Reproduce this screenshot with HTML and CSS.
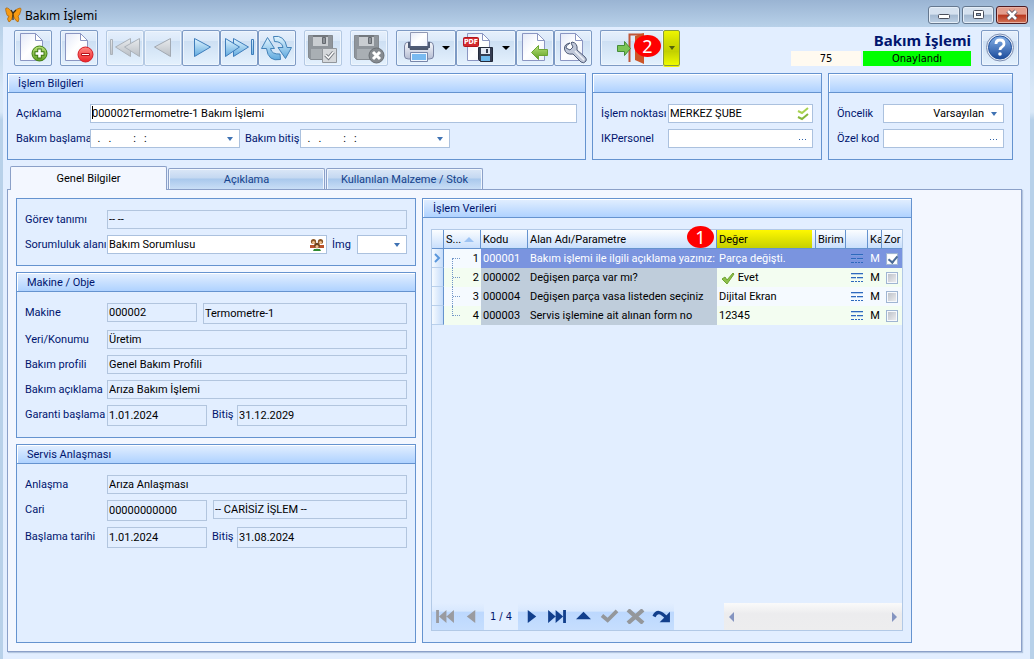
FILE: index.html
```html
<!DOCTYPE html>
<html lang="tr">
<head>
<meta charset="utf-8">
<title>Bakım İşlemi</title>
<link rel="stylesheet" href="styles.css">
</head>
<body>
<svg class="defs" aria-hidden="true">
  <defs>
    <linearGradient id="paper" x1="0" y1="0" x2="1" y2="1"><stop offset="0" stop-color="#e4e9f8"/><stop offset=".5" stop-color="#ffffff"/><stop offset="1" stop-color="#eef1fb"/></linearGradient>
    <linearGradient id="blue" x1="0" y1="0" x2="0" y2="1"><stop offset="0" stop-color="#e2f5ff"/><stop offset="1" stop-color="#5fa9de"/></linearGradient>
    <linearGradient id="gray" x1="0" y1="0" x2="0" y2="1"><stop offset="0" stop-color="#e8ebee"/><stop offset="1" stop-color="#b9bec4"/></linearGradient>
    <linearGradient id="green" x1="0" y1="0" x2="0" y2="1"><stop offset="0" stop-color="#b9e37c"/><stop offset="1" stop-color="#5f9e22"/></linearGradient>
    <linearGradient id="red" x1="0" y1="0" x2="0" y2="1"><stop offset="0" stop-color="#ff8a84"/><stop offset="1" stop-color="#ee2226"/></linearGradient>
    <linearGradient id="metal" x1="0" y1="0" x2="0" y2="1"><stop offset="0" stop-color="#fafbfe"/><stop offset="1" stop-color="#b4bcd2"/></linearGradient>
    <linearGradient id="help" x1="0" y1="0" x2="0" y2="1"><stop offset="0" stop-color="#86b2e8"/><stop offset="1" stop-color="#1c4b9b"/></linearGradient>
    <symbol id="page" viewBox="0 0 32 32"><path d="M3.500 1.500h15l7 7v20h-22z" fill="url(#paper)" stroke="#8b96c2"/><path d="M18.500 1.500v7h7z" fill="#fff" stroke="#8b96c2"/></symbol>
    <symbol id="disk" viewBox="0 0 32 32"><path d="M1.500 3.500h24v24h-22l-2-2z" fill="#8f959b" stroke="#858b91"/><path d="M6 3h15v11H6z" fill="#c9cdd1"/><path d="M6 3h15v2H6z" fill="#74797e"/><path d="M15.500 5.500h3v6h-3z" fill="#8d9298" stroke="#656a70"/><path d="M4 17h18v10H4z" fill="#a9afb4"/></symbol>
    <symbol id="down" viewBox="0 0 8 8"><path d="M1 2h6L4 6z" fill="#3f72b3"/></symbol>
    <symbol id="dots" viewBox="0 0 8 8"><path d="M0 4h1v1H0zM3 4h1v1H3zM6 4h1v1H6z" fill="#2f62a8"/></symbol>
    <symbol id="lines" viewBox="0 0 14 12"><path d="M1 1h12v1H1zM1 5h5v1H1zM7 5h6v1H7zM1 9h3v1H1zM5 9h2v1H5zM8 9h2v1H8zM11 9h2v1h-2z" fill="#2e69bd"/><path d="M1 2h12v1H1zM1 6h5v1H1zM7 6h6v1H7z" fill="#7fa9e0" opacity=".5"/></symbol>
  </defs>
</svg>
<div class="window">
  <header class="titlebar">
    <svg width="17" height="16" viewBox="0 0 17 16" aria-hidden="true"><path d="M8 7Q4 0 1 1q-1 1 1 7 0 1 2 1-3 3 0 6 3-1 4-7 2 6 5 7 2-3 0-6 2-1 2-3 2-5 0-5-4 0-7 6z" fill="#f79a12" stroke="#a86208" stroke-width=".7"/><path d="M8 5v8M8 6L6 3M8 6l3-3" stroke="#38280e" stroke-width="1.200"/></svg>
    <span class="titlebar-text">Bakım İşlemi</span>
    <button class="winbtn" aria-label="Küçült"><svg width="30" height="16"><rect x="9.500" y="7.500" width="11" height="4" rx="1" fill="#fff" stroke="#4a4f5c"/></svg></button>
    <button class="winbtn" aria-label="Büyüt"><svg width="30" height="16"><rect x="10.500" y="3.500" width="10" height="8" rx="1" fill="#fff" stroke="#4a4f5c"/><rect x="13.500" y="6.500" width="4" height="2" fill="#9fb3cc" stroke="#4a4f5c"/></svg></button>
    <button class="winbtn close" aria-label="Kapat"><svg width="30" height="16"><path d="M11 4l8 8M19 4l-8 8" stroke="#5a5260" stroke-width="4.500"/><path d="M11 4l8 8M19 4l-8 8" stroke="#fff" stroke-width="2.600"/></svg></button>
  </header>
  <main class="content">
    <div class="toolbar">
      <button class="tool" aria-label="Yeni"><svg viewBox="0 0 32 32"><use href="#page"/><circle cx="22.500" cy="21.500" r="7.500" fill="url(#green)" stroke="#427f14"/><path d="M22.500 16.500v10M17.500 21.500h10" stroke="#3c7612" stroke-width="4.400"/><path d="M22.500 17.500v8M18.500 21.500h8" stroke="#fff" stroke-width="2.600"/></svg></button>
      <button class="tool" aria-label="Sil"><svg viewBox="0 0 32 32"><use href="#page" x="-1"/><circle cx="22.500" cy="22.500" r="7.500" fill="url(#red)" stroke="#d51d25"/><path d="M18.500 21.500h8v2h-8z" fill="#fff" stroke="#b71018"/></svg></button>
      <div class="tools">
        <button class="tool off" aria-label="İlk kayıt"><svg viewBox="0 0 32 32"><g fill="url(#gray)" stroke="#abb2ba"><path d="M1.500 7.500h2v15h-2zM21.500 6.500v18L6.500 15z"/><path d="M30.500 6.500v18l-15-9.500z"/></g></svg></button>
        <button class="tool off" aria-label="Önceki kayıt"><svg viewBox="0 0 32 32"><path d="M23.500 6.500v18L7.500 15z" fill="url(#gray)" stroke="#a2a9b2"/></svg></button>
        <button class="tool" aria-label="Sonraki kayıt"><svg viewBox="0 0 32 32"><path d="M9.500 6.500v18l16-9.500z" fill="url(#blue)" stroke="#3f7dbb"/></svg></button>
        <button class="tool" aria-label="Son kayıt"><svg viewBox="0 0 32 32"><g fill="url(#blue)" stroke="#3f7dbb"><path d="M10.500 6.500v18L25.500 15z"/><path d="M2.500 6.500v18l14-9.500zM28.500 7.500h2v15h-2z"/></g></svg></button>
        <button class="tool" aria-label="Yenile"><svg viewBox="0 0 32 32"><g fill="url(#blue)" stroke="#4382b8"><path d="M12.500 4.500q11-2 13.500 11h4.500l-6 11-7.500-11h5q-1-6-8.500-6z"/><path d="M19.500 27.500Q7 30 5.500 16.500h-5l6-11 7 11h-4q1 6 9.500 5.500z"/></g></svg></button>
      </div>
      <button class="tool off" aria-label="Kaydet"><svg viewBox="0 0 32 32"><use href="#disk"/><path d="M15.500 16.500h14v14h-14z" fill="#d5d8db" stroke="#92979c"/><path d="M18.500 23l3 3 5-6" fill="none" stroke="#777c82" stroke-width="3.500"/><path d="M18.500 23l3 3 5-6" fill="none" stroke="#fff" stroke-width="1.500"/></svg></button>
      <button class="tool off" aria-label="Kaydet ve kapat"><svg viewBox="0 0 32 32"><use href="#disk"/><circle cx="23.500" cy="23.500" r="7.500" fill="#868b90" stroke="#6a6f74"/><path d="M20 20l7 7M27 20l-7 7" stroke="#fff" stroke-width="3"/></svg></button>
      <div class="tools">
        <button class="tool wide" aria-label="Yazdır"><svg viewBox="0 0 32 32"><path d="M1.500 14q0-4 4-4h21q4 0 4 4v10q0 3-4 3h-21q-4 0-4-3z" fill="url(#metal)" stroke="#7b85a4"/><path d="M7.500.5h17v14h-17z" fill="url(#paper)" stroke="#9098b4"/><path d="M6 14h20l-1 4H7z" fill="#4e596f"/><path d="M6 10v5h20v-5" fill="none" stroke="#4f5b75" stroke-width="2"/><path d="M7.500 20.500h17v9h-17z" fill="#eef5ff" stroke="#7886a8"/><path d="M9 22h14v6H9z" fill="#79baf0"/></svg><svg class="caret-down" viewBox="0 0 8 8"><path d="M0 2h8L4 6z"/></svg></button>
        <button class="tool wide" aria-label="PDF olarak kaydet"><svg viewBox="0 0 32 32"><use href="#page" x="1"/><rect x="0.500" y="5.500" width="15" height="9" rx="1" fill="#d3292e" stroke="#b2161c"/><text x="8" y="12" class="pdf">PDF</text><path d="M15.500 15.500h14v14h-12l-2-2z" fill="#353c50" stroke="#232a3b"/><path d="M18 16h9v6h-9z" fill="#e3e8f3"/><path d="M23 17h2v4h-2z" fill="#353c50"/><path d="M18 24h9v5h-9z" fill="#6db7ea"/></svg><svg class="caret-down" viewBox="0 0 8 8"><path d="M0 2h8L4 6z"/></svg></button>
        <button class="tool" aria-label="Aktar"><svg viewBox="0 0 32 32"><use href="#page"/><path d="M12.500 20.500l7-7v4h9v6h-9v4z" fill="url(#green)" stroke="#6ca434"/></svg></button>
        <button class="tool" aria-label="Ayarlar"><svg viewBox="0 0 32 32"><use href="#page"/><path d="M13 11q-6 1-5.500 6 1 6 8.500 5l8 8q3 2 5-1 1-2-1-4l-8-7q1-7-5-8l-1 1 2 4-3 3-4-2q-1-2 4-5z" fill="#bfc7d8" stroke="#4e5a76"/><path d="M18 19l9 9" stroke="#eef1f7" stroke-width="1.500"/></svg></button>
      </div>
      <div class="exit">
        <button class="tool exit-main" aria-label="Çıkış"><svg viewBox="0 0 32 32"><path d="M13.500 30V2.500H28" fill="none" stroke="#c0573a" stroke-width="2"/><path d="M19 4l9-3v31l-9-4z" fill="#cc5527"/><path d="M1.500 13.500h7v-4l6 7-6 7v-4h-7z" fill="#7cc456" stroke="#448d38"/></svg></button>
        <button class="tool exit-more" aria-label="Çıkış seçenekleri"><svg class="mini" viewBox="0 0 8 8"><path d="M1 2h6L4 6z" fill="#53620a"/></svg></button>
        <span class="badge badge-two">2</span>
      </div>
      <div class="status">
        <h1 class="status-title">Bakım İşlemi</h1>
        <div class="status-row"><span class="status-no">75</span><span class="status-state">Onaylandı</span></div>
      </div>
      <button class="tool" aria-label="Yardım"><svg viewBox="0 0 32 32"><circle cx="16" cy="15.500" r="13.500" fill="#e4ebf6" stroke="#7e8fb1"/><circle cx="16" cy="15.500" r="11.500" fill="url(#help)" stroke="#23529c"/><path d="M12 12q0-4 4-4t4 4q0 2-2 3t-2 3" fill="none" stroke="#fff" stroke-width="2.800"/><circle cx="16" cy="22" r="1.800" fill="#fff"/></svg></button>
    </div>

    <div class="top-groups">
      <section class="group">
        <h2 class="group-head">İşlem Bilgileri</h2>
        <div class="form form-info">
          <div class="row"><label for="acik">Açıklama</label><div class="field grow"><span class="caret"></span><input id="acik" value="000002Termometre-1 Bakım İşlemi"></div></div>
          <div class="row"><label for="basla">Bakım başlama</label><div class="field date"><input id="basla" value="  .   .        :   :"><svg class="mini"><use href="#down"/></svg></div><label class="label-mid long" for="bitis">Bakım bitiş</label><div class="field date"><input id="bitis" value="  .   .        :   :"><svg class="mini"><use href="#down"/></svg></div></div>
        </div>
      </section>
      <section class="group">
        <h2 class="group-head"></h2>
        <div class="form form-point">
          <div class="row"><label for="nokta">İşlem noktası</label><div class="field grow"><input id="nokta" value="MERKEZ ŞUBE"><svg class="icon" viewBox="0 0 14 14"><path d="M2 4l4 2 6-5" fill="none" stroke="#a8d24f" stroke-width="2"/><path d="M2 10l4 2 6-5" fill="none" stroke="#86b83b" stroke-width="2"/></svg></div></div>
          <div class="row"><label for="ik">IKPersonel</label><div class="field grow"><input id="ik"><svg class="mini"><use href="#dots"/></svg></div></div>
        </div>
      </section>
      <section class="group">
        <h2 class="group-head"></h2>
        <div class="form form-code">
          <div class="row"><label for="oncelik">Öncelik</label><div class="field grow"><select id="oncelik" class="right"><option>Varsayılan</option></select><svg class="mini"><use href="#down"/></svg></div></div>
          <div class="row"><label for="ozel">Özel kod</label><div class="field grow"><input id="ozel"><svg class="mini"><use href="#dots"/></svg></div></div>
        </div>
      </section>
    </div>

    <div class="tabs" role="tablist">
      <button class="tab active" role="tab" aria-selected="true">Genel Bilgiler</button>
      <button class="tab" role="tab">Açıklama</button>
      <button class="tab" role="tab">Kullanılan Malzeme / Stok</button>
    </div>

    <div class="page">
      <div class="left">
        <section class="group">
          <div class="form">
            <div class="row"><label for="gorev">Görev tanımı</label><div class="field ro grow"><input id="gorev" value="-- --" readonly></div></div>
            <div class="row"><label for="alan">Sorumluluk alanı</label><div class="field grow"><input id="alan" value="Bakım Sorumlusu"><svg class="icon" viewBox="0 0 14 14"><path d="M0 7h5v3H0zM9 7h5v3H9z" fill="#b9532c"/><path d="M3 13l1-2h6l1 2z" fill="#2f8a2f"/><circle cx="3.500" cy="3.500" r="2.600" fill="#8a5524"/><circle cx="10.500" cy="3.500" r="2.600" fill="#8a5524"/><circle cx="7" cy="7.500" r="2.800" fill="#6d421c"/><circle cx="3.500" cy="4.500" r="1.500" fill="#f0c08b"/><circle cx="10.500" cy="4.500" r="1.500" fill="#f0c08b"/><circle cx="7" cy="8.500" r="1.500" fill="#f0c08b"/></svg></div><label class="label-mid" for="img">İmg</label><div class="field img"><select id="img"><option></option></select><svg class="mini"><use href="#down"/></svg></div></div>
          </div>
        </section>
        <section class="group">
          <h2 class="group-head">Makine / Obje</h2>
          <div class="form">
            <div class="row"><label for="makine">Makine</label><div class="field ro code"><input id="makine" value="000002" readonly></div><div class="field ro tall grow gap"><input aria-label="Makine adı" value="Termometre-1" readonly></div></div>
            <div class="row"><label for="yer">Yeri/Konumu</label><div class="field ro grow"><input id="yer" value="Üretim" readonly></div></div>
            <div class="row"><label for="profil">Bakım profili</label><div class="field ro grow"><input id="profil" value="Genel Bakım Profili" readonly></div></div>
            <div class="row"><label for="bacik">Bakım açıklama</label><div class="field ro grow"><input id="bacik" value="Arıza Bakım İşlemi" readonly></div></div>
            <div class="row"><label for="gar">Garanti başlama</label><div class="field ro tall day"><input id="gar" value="1.01.2024" readonly></div><label class="label-mid" for="garb">Bitiş</label><div class="field ro tall grow"><input id="garb" value="31.12.2029" readonly></div></div>
          </div>
        </section>
        <section class="group fill">
          <h2 class="group-head">Servis Anlaşması</h2>
          <div class="form">
            <div class="row"><label for="anl">Anlaşma</label><div class="field ro grow"><input id="anl" value="Arıza Anlaşması" readonly></div></div>
            <div class="row"><label for="cari">Cari</label><div class="field ro tall day"><input id="cari" value="00000000000" readonly></div><div class="field ro grow gap"><input aria-label="Cari adı" value="-- CARİSİZ İŞLEM --" readonly></div></div>
            <div class="row"><label for="bt">Başlama tarihi</label><div class="field ro tall day"><input id="bt" value="1.01.2024" readonly></div><label class="label-mid" for="btb">Bitiş</label><div class="field ro tall grow"><input id="btb" value="31.08.2024" readonly></div></div>
          </div>
        </section>
      </div>

      <section class="group right-panel">
        <h2 class="group-head">İşlem Verileri</h2>
        <div class="grid">
          <table>
            <colgroup><col class="c-ind"><col class="c-no"><col class="c-code"><col><col class="c-val"><col class="c-unit"><col class="c-ico"><col class="c-ka"><col class="c-zor"></colgroup>
            <thead><tr><th></th><th>S... <svg class="sort" viewBox="0 0 10 6"><path d="M0 5l5-5 5 5z" fill="#9dc3f3"/></svg></th><th>Kodu</th><th class="has-badge">Alan Adı/Parametre<span class="badge badge-one">1</span></th><th class="mark"><span>Değer</span></th><th>Birim</th><th></th><th>Ka</th><th>Zor</th></tr></thead>
            <tbody>
              <tr class="sel"><td class="ind"><svg viewBox="0 0 8 10"><path d="M2 1l4 4-4 4" fill="none" stroke="#5a97dc" stroke-width="2"/></svg></td><td class="no"><span class="tree first"></span>1</td><td class="key">000001</td><td class="key">Bakım işlemi ile ilgili açıklama yazınız:</td><td>Parça değişti.</td><td></td><td class="mid"><svg class="lines"><use href="#lines"/></svg></td><td class="mid">M</td><td class="mid"><input type="checkbox" aria-label="Zorunlu 000001" checked></td></tr>
              <tr><td class="ind"></td><td class="no"><span class="tree"></span>2</td><td class="key">000002</td><td class="key">Değişen parça var mı?</td><td><svg class="tick" viewBox="0 0 14 12"><path d="M1 7l3-2 2 3 6-7 1 1-7 10z" fill="#8dc04a" stroke="#6fa332"/></svg> Evet</td><td></td><td class="mid"><svg class="lines"><use href="#lines"/></svg></td><td class="mid">M</td><td class="mid"><input type="checkbox" aria-label="Zorunlu 000002"></td></tr>
              <tr><td class="ind"></td><td class="no"><span class="tree"></span>3</td><td class="key">000004</td><td class="key">Değişen parça vasa listeden seçiniz</td><td>Dijital Ekran</td><td></td><td class="mid"><svg class="lines"><use href="#lines"/></svg></td><td class="mid">M</td><td class="mid"><input type="checkbox" aria-label="Zorunlu 000004"></td></tr>
              <tr><td class="ind"></td><td class="no"><span class="tree last"></span>4</td><td class="key">000003</td><td class="key">Servis işlemine ait alınan form no</td><td>12345</td><td></td><td class="mid"><svg class="lines"><use href="#lines"/></svg></td><td class="mid">M</td><td class="mid"><input type="checkbox" aria-label="Zorunlu 000003"></td></tr>
            </tbody>
          </table>
          <div class="grid-foot">
            <div class="nav">
              <button aria-label="İlk"><svg viewBox="0 0 20 16"><path d="M0 1h3v14H0zM11 1v14L3 8zM19 1v14l-8-7z" fill="#9a9ba0"/></svg></button>
              <button aria-label="Önceki"><svg viewBox="0 0 20 16"><path d="M14 1v14L5 8z" fill="#9a9ba0"/></svg></button>
            </div>
            <span class="pos">1 / 4</span>
            <div class="nav">
              <button aria-label="Sonraki"><svg viewBox="0 0 20 16"><path d="M6 1v14l9-7z" fill="#123f8c"/></svg></button>
              <button aria-label="Son"><svg viewBox="0 0 20 16"><path d="M0 1v14l8-7zM8 1v14l8-7zM16 1h3v14h-3z" fill="#123f8c"/></svg></button>
              <button aria-label="Düzenle"><svg viewBox="0 0 20 16"><path d="M2 11l8-8 8 8z" fill="#123f8c"/></svg></button>
              <button aria-label="Onayla"><svg viewBox="0 0 20 16"><path d="M2 7l6 5L18 2" fill="none" stroke="#94979b" stroke-width="4"/></svg></button>
              <button aria-label="Vazgeç"><svg viewBox="0 0 20 16"><path d="M2 1l16 14M18 1L2 15" fill="none" stroke="#94979b" stroke-width="4.500"/></svg></button>
              <button aria-label="Yenile"><svg viewBox="0 0 20 16"><path d="M2 8q4-9 13 1" fill="none" stroke="#123f8c" stroke-width="3.500"/><path d="M19 3v11H8z" fill="#123f8c"/></svg></button>
            </div>
            <div class="scroll"><button aria-label="Sola kaydır"><svg viewBox="0 0 6 10"><path d="M5 0v10L0 5z" fill="#8494c0"/></svg></button><button aria-label="Sağa kaydır"><svg viewBox="0 0 6 10"><path d="M1 0v10l5-5z" fill="#8494c0"/></svg></button></div>
          </div>
        </div>
      </section>
    </div>
  </main>
</div>
</body>
</html>
```

FILE: styles.css
```css
* { box-sizing: border-box; }
body { margin: 0; font: 11px/17px Roboto, "DejaVu Sans Condensed", sans-serif; color: #000; }
button, input, select { font: inherit; color: inherit; margin: 0; padding: 0; }
h1, h2 { margin: 0; font: inherit; }
svg { display: block; flex: none; }
.defs { position: absolute; width: 0; height: 0; }

.window { min-height: 100vh; display: flex; flex-direction: column; padding: 0 4px 0 3px; background: linear-gradient(#9ab4d3, #b8d1e9 27px, #d9e8f7 90px, #d9e8f7 112px, #b8d1e9 120px); }
.titlebar { height: 27px; display: flex; align-items: flex-start; gap: 2px; padding: 6px 2px 0 2px; }
.titlebar > svg { margin-top: 1px; }
.titlebar-text { flex: 1; padding-left: 1px; font: 12px/20px "Noto Sans", sans-serif; }
.winbtn { width: 32px; height: 18px; padding: 0; border: 1px solid #65788f; border-radius: 3px; background: linear-gradient(#d5e1ef 45%, #a4b9d1 50%, #bdd0e5); box-shadow: inset 0 0 0 1px #e5eef8; }
.winbtn.close { border-color: #4d1b22; background: linear-gradient(#e39d8c 45%, #b8361d 50%, #d17357); box-shadow: inset 0 0 0 1px #eab2a4; }

.content { flex: 1; display: flex; flex-direction: column; padding: 3px 8px 7px 4px; background: #e2eeff; }
.toolbar { display: flex; gap: 8px; padding: 0 3px 0 7px; }
.tools { display: flex; }
.tool { width: 38px; height: 36px; display: flex; align-items: center; justify-content: center; gap: 7px; border: 1px solid #7d9ac4; border-radius: 2px; background: linear-gradient(#e6f0fc, #dbe9f9 28%, #cddff3 30%, #e4f1fd); box-shadow: inset 0 0 0 1px #eef5fd; }
.tool svg { width: 32px; height: 32px; }
.tool.wide { width: 60px; }
.tool.off { border-color: #b4c9e3; }
.tool .caret-down { width: 8px; height: 8px; }
.pdf { font: bold 7px "DejaVu Sans Condensed", sans-serif; fill: #fff; text-anchor: middle; }
.exit { position: relative; display: flex; }
.exit-main { width: 63px; border-right: 0; border-radius: 2px 0 0 2px; }
.exit-more { width: 17px; background: linear-gradient(#eef600, #d3de00 30%, #c2d000 60%, #eefb00); border-color: #879b3c; box-shadow: 0 1px #f4f500; }
.tool .mini { width: 8px; height: 8px; }
.badge { position: absolute; width: 27px; height: 22px; border-radius: 50%; background: #f00; color: #fff; text-align: center; font: 18px/22px "Noto Sans", sans-serif; }
.badge-two { left: 34px; top: 5px; }
.badge-one { right: 2px; top: -4px; }
.status { flex: 1; display: flex; flex-direction: column; align-items: flex-end; padding-right: 2px; }
.status-title { font: bold 15px/21px "Noto Sans", sans-serif; color: #00156e; }
.status-row { display: flex; gap: 2px; font: 11px/15px "DejaVu Sans Condensed", sans-serif; text-align: center; }
.status-no { width: 70px; background: #fffaf0; }
.status-state { width: 108px; background: #0f0; }

.top-groups { display: grid; grid-template-columns: 579fr 230fr 185fr; gap: 6px; margin: 7px 9px 6px 0; }
.group { border: 1px solid #6593cf; background: #e2eeff; }
.group-head { height: 19px; padding-left: 10px; line-height: 19px; color: #00156e; background: linear-gradient(#e3efff, #afd2ff); border-bottom: 1px solid #6593cf; box-shadow: inset 1px 1px #fff; }
.form { display: flex; flex-direction: column; gap: 6px; padding: 11px 8px; --label: 82px; }
.form-info { --label: 74px; }
.form-point { --label: 67px; }
.form-code { --label: 46px; }
.row { display: flex; align-items: flex-start; }
.row label { width: var(--label); flex: none; line-height: 19px; color: #00156e; white-space: nowrap; }
.row .label-mid { width: 30px; padding-left: 5px; }
.row .long { width: 60px; }
.field { position: relative; display: flex; align-items: center; height: 19px; padding-right: 5px; border: 1px solid #abc1de; background: #fff; }
.field input, .field select { flex: 1; min-width: 0; width: 0; height: 17px; padding: 0 0 0 1px; border: 0; outline: 0; background: none; appearance: none; }
.field .right { text-align: right; text-align-last: right; padding-right: 6px; }
.field.ro { background: none; border-color: #b2c5de; }
.field.tall { height: 21px; }
.grow { flex: 1; min-width: 0; }
.gap { margin-left: 6px; }
.date { width: 150px; }
.code { width: 90px; }
.day { width: 100px; }
.img { width: 50px; }
.mini { width: 8px; height: 8px; }
.icon { width: 14px; height: 14px; margin-right: -3px; }
.caret { position: absolute; left: 1px; top: 1px; width: 1px; height: 13px; background: #000; }

.tabs { display: flex; gap: 1px; align-items: flex-end; height: 23px; padding-left: 3px; }
.tab { width: 157px; height: 21px; border: 1px solid #8ba0c8; border-bottom: 0; border-radius: 2px 2px 0 0; color: #15428b; background: linear-gradient(#dbe7f7, #c4d8f1 45%, #a9c8ec 50%, #c9def6); box-shadow: inset 1px 1px #f0f6fd, inset -1px 0 #f0f6fd; }
.tab.active { height: 24px; margin-bottom: -1px; position: relative; color: #000; background: #f3f7ff; box-shadow: none; }
.page { flex: 1; display: grid; grid-template-columns: 400fr 490fr; gap: 6px; padding: 8px 109px 8px 8px; border: 1px solid #8ba0c8; background: #f3f7ff; box-shadow: 1px 1px 1px #b4c6e0; }
.left { display: flex; flex-direction: column; gap: 6px; }
.fill { flex: 1; }
.right-panel { display: flex; flex-direction: column; }
.grid { flex: 1; display: flex; flex-direction: column; justify-content: space-between; margin: 11px 8px; border: 1px solid #b2c9e6; }

table { width: 100%; table-layout: fixed; border-collapse: separate; border-spacing: 0; }
.c-ind { width: 12px; } .c-no { width: 37px; } .c-code { width: 47px; } .c-val { width: 99px; } .c-unit { width: 30px; } .c-ico { width: 22px; } .c-ka { width: 14px; } .c-zor { width: 20px; }
th { height: 19px; padding: 1px 0 0 2px; font-weight: normal; text-align: left; white-space: nowrap; overflow: hidden; background: linear-gradient(#fbfdff, #c9dffc); border-right: 1px solid #6593cf; border-bottom: 1px solid #6593cf; }
th:last-child { border-right: 0; }
.sort { display: inline-block; width: 10px; height: 6px; }
.has-badge { position: relative; overflow: visible; }
.mark { padding: 0; }
.mark span { display: block; height: 18px; margin-right: 3px; padding-left: 2px; line-height: 19px; background: linear-gradient(#fff800, #c6d000); }
td { height: 19px; padding: 0 0 0 2px; white-space: nowrap; overflow: hidden; background: #f5faff; }
tr:nth-child(even) td { background: #f3fdf1; }
tr td.key { background: #bfcddb; }
tr.sel td { color: #fff; background: #7a94df; }
tr.sel td.no { color: #000; background: #f5faff; }
tr td.ind, tr.sel td.ind { padding: 0 0 0 1px; background: linear-gradient(90deg, #f7fbff, #c5dcfa); border-right: 1px solid #6593cf; border-bottom: 1px solid #b9d0ec; }
.ind svg { width: 8px; height: 10px; }
td.no { position: relative; padding-right: 2px; text-align: right; }
.tree { position: absolute; left: 8px; top: 0; width: 9px; height: 19px; border-left: 1px dotted #7397c8; background: repeating-linear-gradient(90deg, #7397c8 0 1px, transparent 1px 2px) 0 9px / 9px 1px no-repeat; }
.tree.first { top: 9px; height: 10px; background-position: 0 0; }
.tree.last { height: 10px; }
td.mid { padding: 0; text-align: center; }
.lines { width: 14px; height: 12px; margin: 0 auto; }
.tick { display: inline-block; width: 14px; height: 12px; margin-left: 2px; vertical-align: middle; }
td input { appearance: none; display: block; width: 12px; height: 12px; margin: 0 auto; border: 1px solid #9fb5d2; background: linear-gradient(135deg, #b9bec6, #f0f0f2); box-shadow: inset 0 0 0 1px #f7f9fc; }
td input:checked { background: #fff; position: relative; }
td input:checked::after { content: ""; position: absolute; left: 3px; top: 0; width: 4px; height: 7px; border: solid #4b6b96; border-width: 0 2px 2px 0; transform: rotate(40deg); }

.grid-foot { display: flex; height: 27px; }
.nav { display: flex; background: linear-gradient(#e2eeff, #d8e8fe 30%, #bcd8fe 34%, #c6defe); }
.nav button { width: 26px; display: flex; align-items: center; justify-content: center; border: 0; background: none; }
.nav svg { width: 19px; height: 15px; }
.pos { width: 34px; font: 11px/27px "DejaVu Sans Condensed", sans-serif; text-align: center; color: #00156e; }
.scroll { width: 178px; margin-left: auto; display: flex; justify-content: space-between; padding: 0 5px; background: linear-gradient(#fafafa, #ececee 40%, #ededee); }
.scroll button { display: flex; align-items: center; border: 0; background: none; }
.scroll svg { width: 6px; height: 10px; }
```
